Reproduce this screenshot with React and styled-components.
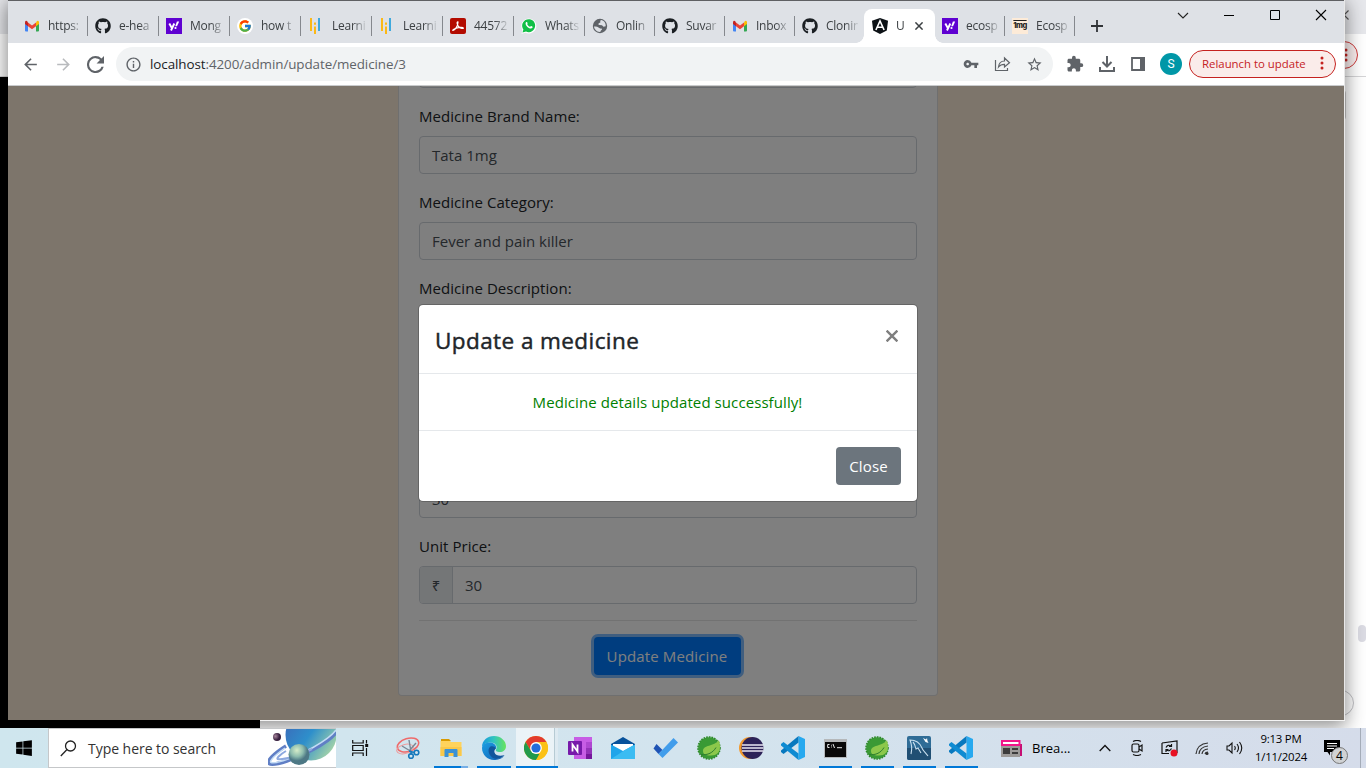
import React from "react";
import styled, { createGlobalStyle } from "styled-components";
import { FaGithub, FaWindows } from "react-icons/fa";
import { FcGoogle } from "react-icons/fc";
import { MdVpnKey, MdInfoOutline, MdStarBorder, MdExtension, MdArrowBack, MdArrowForward, MdRefresh } from "react-icons/md";

const Global = createGlobalStyle`
  * { box-sizing: border-box; }
  body { margin: 0; overflow: hidden; font-family: "Open Sans", "Noto Sans", sans-serif; }
  svg { display: block; flex: none; }
`;

/* ---------- desktop and windows ---------- */
const Desktop = styled.div`
  position: relative;
  display: flex;
  flex-direction: column;
  justify-content: flex-end;
  width: 1366px;
  height: 768px;
  overflow: hidden;
  background: #fff;
`;
const BackWindow = styled.div`
  position: absolute;
  inset: 0 0 40px 0;
  background: #fff;
`;
const BackStrip = styled.div`
  height: 34px;
  background: #e7e8ec;
  display: flex;
  justify-content: flex-end;
  align-items: center;
  padding: 0 17px 5px 0;
`;
const BackBar = styled.div`
  height: 43px;
  border-bottom: 1px solid #d5d5d7;
  display: flex;
  justify-content: flex-end;
  align-items: center;
  padding-right: 8px;
`;
const BackPill = styled.div`
  width: 60px;
  height: 28px;
  border: 1px solid #cf3a3a;
  border-radius: 14px;
  background: #fbeeee;
  display: flex;
  align-items: center;
  justify-content: flex-end;
  padding-right: 9px;
`;
const DarkWindow = styled.div`
  position: absolute;
  left: 0;
  top: 77px;
  width: 260px;
  height: 651px;
  background: #000;
`;
const ScrollThumb = styled.div`
  position: absolute;
  right: 0;
  top: 625px;
  width: 8px;
  height: 17px;
  border-radius: 4px;
  background: #dcdce4;
`;
const RoundButton = styled.div`
  position: absolute;
  right: 12px;
  top: 690px;
  width: 26px;
  height: 26px;
  border: 1px solid #c3c3c7;
  border-radius: 50%;
`;
const SideField = styled.div`
  position: absolute;
  right: 20px;
  top: 90px;
  width: 40px;
  height: 30px;
  border: 1px solid #ccc;
  border-radius: 3px;
`;
const Browser = styled.main`
  position: absolute;
  left: 8px;
  top: 0;
  width: 1336px;
  height: 720px;
  display: flex;
  flex-direction: column;
  border-top: 1px solid #5f6063;
  box-shadow: 1px 0 0 #e8e8e8, 0 4px 18px 2px rgba(0, 0, 0, 0.46);
  &::after {
    content: "";
    position: absolute;
    left: 252px;
    right: -1px;
    top: 100%;
    height: 1px;
    background: #f4f4f4;
  }
`;

/* ---------- tab strip ---------- */
const Strip = styled.div`
  display: flex;
  height: 42px;
  padding-left: 9px;
  background: #dee1e6;
`;
const TabBox = styled.div`
  position: relative;
  display: flex;
  align-items: center;
  gap: ${(p) => (p.$active ? 7 : 8)}px;
  width: ${(p) => p.$w}px;
  height: 34px;
  margin-top: 8px;
  padding: 0 ${(p) => (p.$active ? 12 : 6)}px 0 7px;
  background: ${(p) => (p.$active ? "#fff" : "transparent")};
  border-radius: 8px 8px 0 0;
  &::after {
    content: "";
    position: absolute;
    right: 0;
    top: 7px;
    width: 1px;
    height: 20px;
    background: ${(p) => (p.$line ? "#85888d" : "transparent")};
  }
`;
const Flare = styled.i`
  position: absolute;
  bottom: 0;
  ${(p) => (p.$right ? "left: 100%" : "right: 100%")};
  width: 8px;
  height: 8px;
  background: radial-gradient(circle at ${(p) => (p.$right ? "100%" : "0")} 0, transparent 7.5px, #fff 8px);
`;
const TabText = styled.span`
  flex: 1;
  min-width: 0;
  white-space: nowrap;
  font-size: 12px;
  line-height: 18px;
  letter-spacing: -0.25px;
  color: #3c4043;
  mask-image: linear-gradient(90deg, #000 60%, rgba(0, 0, 0, 0.1) 100%);
`;
const NewTab = styled.div`
  padding: 19px 0 0 16px;
`;
const Controls = styled.div`
  display: flex;
  align-items: flex-start;
  gap: 34px;
  margin-left: auto;
  padding: 8px 17px 0 0;
`;

/* ---------- toolbar ---------- */
const Toolbar = styled.div`
  display: flex;
  align-items: center;
  height: 43px;
  padding: 0 8px 0 13px;
  background: #fff;
  border-bottom: 1px solid #c9cbcd;
  color: #5f6368;
`;
const NavButtons = styled.div`
  display: flex;
  align-items: center;
  gap: 14px;
  margin-right: 12px;
`;
const Address = styled.div`
  display: flex;
  align-items: center;
  width: 937px;
  height: 34px;
  border-radius: 17px;
  background: #f1f3f4;
  padding: 0 10px 0 9px;
`;
const Url = styled.span`
  flex: 1;
  margin-left: 8px;
  font-size: 13.4px;
  line-height: 20px;
  letter-spacing: -0.07px;
  color: #5f6368;
  b { font-weight: 400; color: #202124; }
`;
const AddressIcons = styled.div`
  display: flex;
  align-items: center;
  gap: 15px;
`;
const Actions = styled.div`
  display: flex;
  align-items: center;
  gap: 14px;
  margin-left: 13px;
`;
const Avatar = styled.div`
  width: 22px;
  height: 22px;
  border-radius: 50%;
  background: #0097a7;
  color: #fff;
  font: 12px/22px Roboto, sans-serif;
  text-align: center;
`;
const Relaunch = styled.div`
  display: flex;
  align-items: center;
  justify-content: space-between;
  width: 147px;
  height: 28px;
  margin-left: auto;
  padding: 0 11px 2px 12px;
  border: 1px solid #c5221f;
  border-radius: 14px;
  background: #faecea;
  color: #c5221f;
  font-size: 11.4px;
  white-space: nowrap;
`;

/* ---------- page ---------- */
const Viewport = styled.section`
  position: relative;
  flex: 1;
  overflow: hidden;
  display: flex;
  justify-content: center;
  align-items: flex-end;
  padding: 0 16px 24px 0;
  background: antiquewhite;
`;
const Card = styled.div`
  width: 540px;
  flex: none;
  padding: 20px;
  background: #fff;
  border: 1px solid rgba(0, 0, 0, 0.125);
  border-radius: 4px;
`;
const Group = styled.div`
  margin-bottom: 16px;
`;
const Label = styled.label`
  display: block;
  height: 24px;
  margin-bottom: 8px;
  font-size: 15px;
  line-height: 25px;
  letter-spacing: 0.06px;
  color: #212529;
`;
const InputRow = styled.div`
  display: flex;
  height: 38px;
  border: 1px solid #ced4da;
  border-radius: 4px;
  overflow: hidden;
  font-size: 15px;
  line-height: 37px;
  color: #495057;
`;
const Addon = styled.span`
  width: 33px;
  text-align: center;
  background: #e9ecef;
  border-right: 1px solid #ced4da;
`;
const Value = styled.span`
  padding: 0 12px;
`;
const Actionbar = styled.div`
  display: flex;
  justify-content: center;
  padding: 16px 2px 0 0;
  border-top: 1px solid rgba(0, 0, 0, 0.1);
`;
const Button = styled.button`
  width: ${(p) => p.$w}px;
  height: 38px;
  padding: 0;
  border: 0;
  border-radius: 4px;
  background: ${(p) => (p.$primary ? "#007bff" : "#6c757d")};
  box-shadow: ${(p) => (p.$primary ? "0 0 0 3px #80bdff" : "none")};
  color: #fff;
  font: 15px/38px "Open Sans", sans-serif;
  letter-spacing: 0.14px;
`;
const Backdrop = styled.div`
  position: absolute;
  inset: 0;
  background: rgba(0, 0, 0, 0.5);
`;
const Modal = styled.div`
  position: absolute;
  left: 410px;
  top: 218px;
  width: 500px;
  border: 1px solid rgba(0, 0, 0, 0.2);
  border-radius: 5px;
  background: #fff;
  background-clip: padding-box;
`;
const ModalHeader = styled.header`
  display: flex;
  align-items: flex-start;
  justify-content: space-between;
  height: 69px;
  padding: 16px;
  border-bottom: 1px solid #e5e8eb;
  h4 {
    margin: 0;
    font-size: 22.5px;
    font-weight: 400;
    -webkit-text-stroke: 0.45px #212529;
    line-height: 39px;
    letter-spacing: 0.42px;
    color: #212529;
  }
  svg { margin: 9px 3px 0 0; }
`;
const ModalBody = styled.div`
  height: 56px;
  padding: 16px 17px 16px 16px;
  text-align: center;
  color: green;
  font-size: 15px;
  line-height: 25px;
  letter-spacing: 0.08px;
`;
const ModalFooter = styled.footer`
  display: flex;
  justify-content: flex-end;
  padding: 16px;
  border-top: 1px solid #e5e8eb;
`;

/* ---------- taskbar ---------- */
const Taskbar = styled.footer`
  position: relative;
  display: flex;
  height: 40px;
  background: linear-gradient(90deg, #cfe6ee, #d3e4ee 50%, #d5dcea);
  color: #000;
`;
const Start = styled.div`
  display: grid;
  place-items: center;
  width: 48px;
`;
const Search = styled.div`
  display: flex;
  align-items: center;
  width: 288px;
  padding-left: 11px;
  background: #fff;
  border: 1px solid #c5c7c9;
  border-right: 0;
  font-size: 14px;
  letter-spacing: -0.04px;
  color: #333;
  span { flex: 1; margin-left: 11px; white-space: nowrap; }
`;
const TaskView = styled.div`
  display: grid;
  place-items: center;
  width: 50px;
  padding-right: 2px;
`;
const Slot = styled.div`
  position: relative;
  display: grid;
  place-items: center;
  width: ${(p) => p.$w}px;
  padding-right: ${(p) => (p.$current ? 2 : 0)}px;
  background: ${(p) => (p.$current ? "linear-gradient(90deg, transparent 1px, #ebf3f7 1px 39px, #b7cbd4 39px 40px, #deeaf1 40px)" : "none")};
  &::after {
    content: "";
    position: absolute;
    bottom: 0;
    left: ${(p) => (p.$current ? 1 : 5)}px;
    right: ${(p) => (p.$current ? 0 : 4)}px;
    height: 2px;
    background: ${(p) => (p.$open ? (p.$stack ? "linear-gradient(90deg, #0078d7 78%, #76aee6 78%)" : "#0078d7") : "transparent")};
  }
`;
const News = styled.div`
  display: flex;
  align-items: center;
  gap: 9px;
  margin-left: 19px;
  width: 98px;
  font-size: 13px;
`;
const Tray = styled.div`
  display: flex;
  align-items: center;
  gap: 16px;
  svg:nth-child(2) { margin-left: 2px; }
`;
const Clock = styled.div`
  width: 66px;
  margin-left: 5px;
  padding-top: 2px;
  text-align: center;
  font-size: 11.4px;
  line-height: 18px;
  letter-spacing: -0.22px;
`;
const Notice = styled.div`
  position: relative;
  width: 37px;
  margin-left: 10px;
  padding-top: 12px;
  border-right: 1px solid #a4acb8;
`;
const Badge = styled.span`
  position: absolute;
  left: 7px;
  top: 19px;
  width: 17px;
  height: 17px;
  border: 1px solid #777;
  border-radius: 50%;
  background: #d0d2d4;
  font-size: 12px;
  line-height: 15px;
  text-align: center;
`;

/* ---------- drawings ---------- */
const Gmail = () => (
  <svg width="16" height="16" viewBox="0 0 16 16">
    <path d="M1 4v8.5q0 1 1 1h2V7z" fill="#4285f4" />
    <path d="M15 4v8.5q0 1-1 1h-2V7z" fill="#34a853" />
    <path d="M12 4.500 13 3q2-1 2 1.500V6l-3 2.300z" fill="#fbbc04" />
    <path d="M4 4.500 8 7.500l4-3v3.800L8 11.200 4 8.300z" fill="#ea4335" />
    <path d="M1 4.500Q1 2 3 3l1 1.500v3.800L1 6z" fill="#c5221f" />
  </svg>
);
const Yahoo = () => (
  <svg width="16" height="16" viewBox="0 0 16 16">
    <path fill="#5f01d1" d="M0 0h16v16H0z" />
    <path d="m3.300 5.500 2.400 4.300M8.300 5.500 5 12.500" stroke="#fff" strokeWidth="1.900" fill="none" />
    <path d="M10.900 3.500h2.300L11 8.300H9.200z" fill="#fff" />
    <circle cx="9.500" cy="10" r="1.100" fill="#fff" />
  </svg>
);
const Bars = () => (
  <svg width="16" height="16" viewBox="0 0 16 16">
    <path d="M3 0v13M7 8.500v7.500M7 4.500v2.200" stroke="#fbb917" strokeWidth="2" />
    <path d="M11 0v13" stroke="#3fa9dd" strokeWidth="2" />
  </svg>
);
const Pdf = () => (
  <svg width="16" height="16" viewBox="0 0 16 16">
    <rect width="16" height="16" rx="2" fill="#b30b00" />
    <path d="M3 12.500c2-.3 5-4.500 5-8.500-1.500-.7-1 3 .8 4.800 2 2 4.700 2 4.600 1.200-.2-1-6.400-1.200-9.900 1.500-.8.7-.9 1.100-.5 1z" fill="none" stroke="#fff" strokeWidth="1.200" />
  </svg>
);
const Github = () => <FaGithub size={16} color="#1b1f23" />;
const Globe = () => (
  <svg width="16" height="16" viewBox="0 0 16 16">
    <circle cx="8" cy="8" r="7.200" fill="#5f6368" />
    <path d="M2 8.500q3-.5 4.500 1T10 10.500c.5 1.500-1.500 1.500-1.500 3.300-3 .6-6-1.800-6.500-5.300zM9 2q-1.500 1-.5 2.200L6.500 5.500q-.5 1.500 1 1.500l2.500.3 1.500 1.500 2.200-.5C14 5 12 2.500 9 2z" fill="#dee1e6" />
  </svg>
);
const Disc = styled.span`
  display: grid;
  place-items: center;
  flex: none;
  width: 16px;
  height: 16px;
  border-radius: 50%;
  background: #fff;
`;
const Google = () => (
  <Disc><FcGoogle size={14} /></Disc>
);
const Whats = () => (
  <svg width="16" height="16" viewBox="0 0 16 16">
    <path d="M.5 15.700 1.500 12A7.500 7.500 0 1 1 4.500 14.700z" fill="#fff" />
    <path d="m1.500 14.500.9-3A6.500 6.500 0 1 1 5 13.600z" fill="#12bf47" />
    <path d="M5 4.300c.7-.6 1.200-.4 1.500.6.3.8-.6 1 0 1.800q.9 1.400 2.200 2c.8.3.9-1 1.600-.7 1.500.7 1.600.8 1.100 1.700-1 1.600-3.700.6-5.200-1C4.600 7.100 4.100 5.200 5 4.300z" fill="#fff" />
  </svg>
);
const Shield = () => (
  <svg width="18" height="16" viewBox="0 0 18 16">
    <path d="M9 0 17 2.700 15.800 12.500 9 16 2.200 12.500 1 2.700z" fill="#0c1116" />
    <path d="M4.900 12 9 2.900 13.100 12M6.300 9.300h5.400" stroke="#fff" strokeWidth="1.600" fill="none" />
  </svg>
);
const MgBox = styled.span`
  flex: none;
  width: 16px;
  height: 16px;
  background: #fdebd8;
  color: #222;
  font: 800 7.5px/16px Inter, sans-serif;
  letter-spacing: -0.6px;
  text-align: center;
  text-decoration: overline;
`;
const Dots = ({ color = "#c5221f" }) => (
  <svg width="4" height="14" viewBox="0 0 4 14" fill={color}>
    <circle cx="2" cy="2" r="1.500" /><circle cx="2" cy="7" r="1.500" /><circle cx="2" cy="12" r="1.500" />
  </svg>
);
const Cross = ({ s = 10, c = "#000", w = 1.1 }) => (
  <svg width={s} height={s} viewBox="0 0 10 10"><path d="m.5.5 9 9m0-9-9 9" stroke={c} strokeWidth={w} /></svg>
);
const Planet = () => (
  <svg width="68" height="38" viewBox="0 0 68 38">
    <defs>
      <linearGradient id="pl" x1="0" x2="1" y1="0" y2=".7"><stop stopColor="#3e62b5" /><stop offset=".55" stopColor="#2e8fcb" /><stop offset="1" stopColor="#a4d3a8" /></linearGradient>
      <radialGradient id="mn" cx=".4" cy=".3"><stop stopColor="#d6edc9" /><stop offset=".6" stopColor="#8dbcae" /><stop offset="1" stopColor="#4d7885" /></radialGradient>
      <radialGradient id="sm" cx=".3" cy=".4"><stop stopColor="#a8879d" /><stop offset="1" stopColor="#38203f" /></radialGradient>
    </defs>
    <circle cx="43" cy="6" r="25.500" fill="url(#pl)" />
    <path d="M18 17C5 25-2 33 1 34.500c5 3 28-5 44-14S67 5 68 3" fill="none" stroke="#607fc5" strokeWidth="3.500" />
    <path d="M17 19C7 26 1 32 3 33.500c5 2 26-6 42-15S66 4 68 1" fill="none" stroke="#c3dcf5" strokeWidth="1.500" />
    <path d="M18 22c-7 4-10 8-8 8 5 1 20-3 34-10" fill="none" stroke="#8da9df" strokeWidth="2" />
    <circle cx="31" cy="25.500" r="10.500" fill="url(#mn)" />
    <circle cx="9" cy="8" r="4" fill="url(#sm)" />
  </svg>
);
const Snip = () => (
  <svg width="24" height="24" viewBox="0 0 24 24" fill="none">
    <ellipse cx="12" cy="9" rx="11" ry="6.500" transform="rotate(-17 12 9)" stroke="#ef6a6a" strokeWidth="1.500" />
    <ellipse cx="9" cy="13" rx="8.500" ry="4.500" transform="rotate(-15 9 13)" stroke="#ef9a9a" />
    <path d="m13 4 2 12M20 7l-7 8M6 10l10 6" stroke="#7a8794" strokeWidth="1.400" />
    <circle cx="15" cy="20" r="2.300" stroke="#1678bb" strokeWidth="1.600" />
    <circle cx="20.500" cy="16.500" r="2.300" stroke="#1678bb" strokeWidth="1.600" />
    <path d="m13 15 5 1.500M15 16v3" stroke="#1678bb" strokeWidth="1.500" />
  </svg>
);
const Explorer = () => (
  <svg width="22" height="19" viewBox="0 0 22 19">
    <path d="M1 0h8l2 2H1z" fill="#d99a00" /><path d="M.5 2H10l1 1h10.500v14h-21z" fill="#ffd35c" /><path d="M.5 8h21v9h-21z" fill="#fac849" />
    <path d="M4.500 18v-7q0-1 1-1h11q1 0 1 1v7h-4v-4h-5v4z" fill="#3b92d6" />
  </svg>
);
const Edge = () => (
  <svg width="24" height="24" viewBox="0 0 24 24">
    <defs>
      <linearGradient id="eg" x1="0" x2="1"><stop stopColor="#1797df" /><stop offset=".5" stopColor="#32c5bd" /><stop offset="1" stopColor="#68e45c" /></linearGradient>
      <linearGradient id="eb" x1="0" x2="1" y1="0" y2="1"><stop stopColor="#1b9de2" /><stop offset="1" stopColor="#1261b5" /></linearGradient>
    </defs>
    <path d="M0 11C0 4.500 5.500 0 12 0c7 0 12 5 12 10 0 4-3 6-6 6-3.500 0-5-1.300-3.800-2.800C16 10 13 6.500 8.500 6.500 4 6.500 1 9 0 11z" fill="url(#eg)" />
    <path d="M0 12c0-3.500 4-6 8.500-5.500 4 .5 6.500 3.500 5.500 6-6-1-7 6-1 9 3 1.500 7 .5 9.500-2C20 23 15.500 24 12 24 5.500 24 0 18.500 0 12z" fill="url(#eb)" />
    <path d="M8.500 10.500C4.500 13 7 21 12.500 22.500c4 .8 8-1 10-3.500-4 1.500-9 .8-10-2.500-.6-2 .3-3 1.500-4-1.500-2-3.500-2.800-5.500-2z" fill="#11569d" />
  </svg>
);
const Chrome = () => (
  <svg width="24" height="24" viewBox="0 0 24 24">
    <circle cx="12" cy="12" r="12" fill="#fbc116" />
    <path d="M12 6.200h10.500A12 12 0 0 0 1.600 6L7 15z" fill="#e33b2e" />
    <path d="M1.600 6 7 15l5 2.900h5L12 24A12 12 0 0 1 1.600 6z" fill="#229a4b" />
    <path d="M17 15l-5 9A12 12 0 0 0 22.400 6H12z" fill="#fbc116" />
    <circle cx="12" cy="12" r="5.900" fill="#fff" /><circle cx="12" cy="12" r="4.600" fill="#246ddb" />
  </svg>
);
const OneNote = () => (
  <svg width="24" height="22" viewBox="0 0 24 22">
    <path fill="#c75de5" d="M6 0h18v22H6z" /><path fill="#ae47d1" d="M18 5h6v6h-6z" /><path fill="#9332b8" d="M18 11h6v6h-6z" /><path fill="#75179b" d="M18 17h6v5h-6z" />
    <rect y="4" width="14" height="14" rx="1" fill="#7719aa" /><path d="M4.500 14.500V7.500l5 7v-7" fill="none" stroke="#fff" strokeWidth="1.800" />
  </svg>
);
const Mail = () => (
  <svg width="24" height="22" viewBox="0 0 24 22">
    <path d="M0 7 12 0l12 7v4H0z" fill="#08529b" /><path d="M2 7h20v2.500L12 15 2 9.500z" fill="#fff" /><path d="M0 7.500 12 14 24 7.500V22H0z" fill="#20a5ea" /><path d="M0 22 14 13 24 7.500V22z" fill="#3bbcf2" />
  </svg>
);
const Todo = () => (
  <svg width="25" height="20" viewBox="0 0 25 20"><path d="m3.500 6 6 6-4 4-5-5.500z" fill="#1e53b4" /><path d="M20.500 0 25 4.500 9.500 20l-4-4z" fill="#419deb" /></svg>
);
const Spring = () => (
  <svg width="24" height="24" viewBox="0 0 24 24">
    <circle cx="12" cy="12" r="10.800" fill="#3a9a35" /><circle cx="12" cy="12" r="11" fill="none" stroke="#2f8a2b" strokeWidth="1.600" strokeDasharray="1.700 1" />
    <path d="M22 4c3 11-1 16-9 15.500-4-.2-7-1-7-4.500C6 8.500 17 11 22 4z" fill="#8cc84b" /><path d="M4 18.500c7 1 12-2 15-7" stroke="#2d7d2f" fill="none" />
  </svg>
);
const Eclipse = () => (
  <svg width="25" height="22" viewBox="0 0 25 22">
    <circle cx="11" cy="11" r="11" fill="#f39a2e" /><circle cx="13.500" cy="11" r="11" fill="#2d2358" /><path d="M3 8h21.500M3 11h21.500M3 14h21.500" stroke="#e9e7f2" strokeWidth="1.600" />
  </svg>
);
const Code = () => (
  <svg width="24" height="24" viewBox="0 0 24 24">
    <path d="M17.500 0 24 3v18l-6.500 3z" fill="#27a9ef" /><path d="M17.500 0v6.500L2.500 18 0 16v-1.500z" fill="#0878be" /><path d="M17.500 24v-6.500L2.500 6 0 8v1.500z" fill="#0f8bd2" />
  </svg>
);
const Cmd = () => (
  <svg width="23" height="19" viewBox="0 0 23 19">
    <path fill="#b5b8ba" d="M0 0h23v19H0z" /><path fill="#090909" d="M1 3h21v15H1z" /><path d="M5.500 5.500H3.700v3h1.800M7.500 5.800v.8m0 1v.8M9 5l1.500 4M13 8.700h5" fill="none" stroke="#e8e8e8" strokeWidth="1" />
  </svg>
);
const MySql = () => (
  <svg width="24" height="24" viewBox="0 0 24 24">
    <rect width="24" height="24" rx="2" fill="#2f6c96" /><path d="M0 12h24v10q0 2-2 2H2q-2 0-2-2z" fill="#204f73" />
    <path d="M4 18C5 14 5 9 3 4c6 0 10 3 12 8 1 3 3 4 6 8M6 6q2 2 3 7l2-1 3 5" fill="none" stroke="#c9dfee" strokeWidth="1.100" /><path d="m16 2 3 1.500 1-1.500.5 3 1 2-3-1z" fill="#fff" />
  </svg>
);

const tabs = [
  { icon: <Gmail />, text: "https:", w: 71 },
  { icon: <Github />, text: "e-hea", w: 71 },
  { icon: <Yahoo />, text: "Mong", w: 71 },
  { icon: <Google />, text: "how t", w: 71 },
  { icon: <Bars />, text: "Learni", w: 71 },
  { icon: <Bars />, text: "Learni", w: 71 },
  { icon: <Pdf />, text: "44572", w: 71 },
  { icon: <Whats />, text: "Whats", w: 71 },
  { icon: <Globe />, text: "Onlin", w: 70 },
  { icon: <Github />, text: "Suvar", w: 70 },
  { icon: <Gmail />, text: "Inbox", w: 70 },
  { icon: <Github />, text: "Clonin", w: 69 },
  { icon: <Shield />, text: "U", w: 71, active: true },
  { icon: <Yahoo />, text: "ecosp", w: 70 },
  { icon: <MgBox>1mg</MgBox>, text: "Ecosp", w: 70 },
];

const fields = [
  { label: "Medicine Brand Name:", value: "Tata 1mg" },
  { label: "Medicine Category:", value: "Fever and pain killer" },
  { label: "Medicine Description:", value: "" },
  { label: "", value: "" },
  { label: "", value: "30" },
  { label: "Unit Price:", value: "30", addon: "₹" },
];

const apps = [
  { icon: <Snip />, w: 43 },
  { icon: <Explorer />, w: 43, open: true, stack: true },
  { icon: <Edge />, w: 43, open: true },
  { icon: <Chrome />, w: 43, open: true, current: true },
  { icon: <OneNote />, w: 43 },
  { icon: <Mail />, w: 43 },
  { icon: <Todo />, w: 43 },
  { icon: <Spring />, w: 43 },
  { icon: <Eclipse />, w: 42 },
  { icon: <Code />, w: 42 },
  { icon: <Cmd />, w: 42, open: true },
  { icon: <Spring />, w: 42, open: true },
  { icon: <MySql />, w: 42, open: true },
  { icon: <Code />, w: 42, open: true },
];

export default function App() {
  return (
    <Desktop>
      <Global />
      <BackWindow>
        <BackStrip><Cross c="#555" /></BackStrip>
        <BackBar><BackPill><Dots /></BackPill></BackBar>
        <SideField />
      </BackWindow>
      <DarkWindow />
      <ScrollThumb />
      <RoundButton />
      <Browser>
        <Strip>
          {tabs.map((t, i) => (
            <TabBox key={i} $w={t.w} $active={t.active} $line={!t.active && i !== 11 && i !== 13 ? true : i === 13}>
              {t.icon}
              <TabText>{t.text}</TabText>
              {t.active && <Cross s={8} c="#3c4043" w={1.9} />}
              {t.active && <Flare />}
              {t.active && <Flare $right />}
            </TabBox>
          ))}
          <NewTab>
            <svg width="12" height="12" viewBox="0 0 12 12"><path d="M6 0v12M0 6h12" stroke="#303337" strokeWidth="1.800" /></svg>
          </NewTab>
          <Controls>
            <svg width="12" height="12" viewBox="0 0 12 12"><path d="m1 4 5 5 5-5" fill="none" stroke="#222" strokeWidth="1.100" /></svg>
            <svg width="12" height="12" viewBox="0 0 12 12"><path d="M1 6.500h10" stroke="#000" /></svg>
            <svg width="12" height="12" viewBox="0 0 12 12"><path d="M1.500 1.500h9v9h-9z" fill="none" stroke="#000" /></svg>
            <svg width="12" height="12" viewBox="0 0 12 12"><path d="m1 1 10 10m0-10L1 11" stroke="#000" strokeWidth="1.100" /></svg>
          </Controls>
        </Strip>
        <Toolbar>
          <NavButtons>
            <MdArrowBack size={19} />
            <MdArrowForward size={19} color="#b9bbbe" />
            <svg width="17" height="17" viewBox="4 4 16 16" fill="#5f6368"><path d="M17.650 6.350A7.950 7.950 0 0 0 12 4a8 8 0 1 0 7.730 10h-2.080A6 6 0 1 1 12 6c1.660 0 3.140.69 4.220 1.780L13 11h7V4z" /></svg>
          </NavButtons>
          <Address>
            <MdInfoOutline size={17} />
            <Url><b>localhost</b>:4200/admin/update/medicine/3</Url>
            <AddressIcons>
              <MdVpnKey size={16} />
              <svg width="17" height="16" viewBox="0 0 17 16" fill="none" stroke="#5f6368" strokeWidth="1.200"><path d="M1.500 4v10.500h12V12" /><path d="M4.500 11c.5-4.500 3-6 6-6V2l5 4.700-5 4.300V8.300c-3 0-4.500.7-6 2.700z" /></svg>
              <MdStarBorder size={17} />
            </AddressIcons>
          </Address>
          <Actions>
            <MdExtension size={18} />
            <svg width="18" height="16" viewBox="0 0 18 16" fill="none" stroke="#5f6368" strokeWidth="2"><path d="M9 0v10M4.500 6 9 10.500 13.500 6M2 11v4h14v-4" /></svg>
            <svg width="16" height="14" viewBox="-1 0 16 14"><path d="M1 1h12v12H1z" fill="none" stroke="#5f6368" strokeWidth="1.800" /><path d="M9 0h5v14H9z" fill="#5f6368" /></svg>
            <Avatar>S</Avatar>
          </Actions>
          <Relaunch>Relaunch to update <Dots /></Relaunch>
        </Toolbar>
        <Viewport>
          <Card>
            <Group><InputRow /></Group>
            {fields.map((f, i) => (
              <Group key={i}>
                <Label>{f.label}</Label>
                <InputRow>
                  {f.addon && <Addon>{f.addon}</Addon>}
                  <Value>{f.value}</Value>
                </InputRow>
              </Group>
            ))}
            <Actionbar><Button $primary $w={147}>Update Medicine</Button></Actionbar>
          </Card>
          <Backdrop />
          <Modal role="dialog">
            <ModalHeader>
              <h4>Update a medicine</h4>
              <Cross s={12} c="#7f7f7f" w={2} />
            </ModalHeader>
            <ModalBody>Medicine details updated successfully!</ModalBody>
            <ModalFooter><Button $w={65}>Close</Button></ModalFooter>
          </Modal>
        </Viewport>
      </Browser>
      <Taskbar>
        <Start><FaWindows size={18} /></Start>
        <Search>
          <svg width="17" height="17" viewBox="0 0 17 17"><circle cx="10.500" cy="6" r="5" fill="none" stroke="#222" strokeWidth="1.300" /><path d="M7 9.500.8 16" stroke="#222" strokeWidth="1.300" /></svg>
          <span>Type here to search</span>
          <Planet />
        </Search>
        <TaskView>
          <svg width="17" height="16" viewBox="0 0 17 16" fill="none" stroke="#111" strokeWidth="1.200"><path d="M.7 0v3h10.500V0M.7 5.500h10.500v5H.7zM.7 16v-3h10.500v3M14.500 0v3.500M14.500 8v8" /><path d="M13.200 4h3v3h-3z" fill="#111" stroke="none" /></svg>
        </TaskView>
        {apps.map((a, i) => (
          <Slot key={i} $w={a.w} $open={a.open} $current={a.current} $stack={a.stack}>{a.icon}</Slot>
        ))}
        <News>
          <svg width="22" height="17" viewBox="0 0 22 17"><path d="M18 4h3v12h-3z" fill="#c50f73" /><path d="M0 5h19v12H0z" fill="#9d9b99" /><path d="M1 1h17.500v4H1z" fill="#fff" stroke="#f01588" strokeWidth="2" /><path d="M2 8h7v6H2zM11 8h6v2h-6zM11 12h6v2h-6z" fill="#3c3c3c" /></svg>
          Brea...
        </News>
        <Tray>
          <svg width="12" height="8" viewBox="0 0 12 8"><path d="m.7 7 5.300-5.500L11.300 7" fill="none" stroke="#111" strokeWidth="1.300" /></svg>
          <svg width="16" height="16" viewBox="0 0 16 16" fill="none" stroke="#111" strokeWidth="1.200"><rect x="3" y="4" width="7" height="8" rx="1.500" /><path d="m10 7 3-2v6l-3-2M4 1.500Q8-.5 12 1.500M4 14.500q4 2 8 0" /></svg>
          <svg width="17" height="17" viewBox="0 0 17 17" fill="none" stroke="#111" strokeWidth="1.200"><path d="M1 3 16 1v12M1 3v10.500h7" /><path d="M5 7.500Q7 4 10 6M10.500 4v2.500H8M10.500 8.500Q8.500 12 5.500 10M5 12V9.500h2.500" /><circle cx="13" cy="13" r="3.500" fill="#e81123" stroke="none" /></svg>
          <svg width="16" height="16" viewBox="0 0 16 16" fill="none" stroke="#333" strokeWidth="1.200"><path d="M2 14Q3 4 14 3M5 14q.5-7 9-8M8 14q.5-4.500 6-5M11 14q.5-2 3-2" /><circle cx="13" cy="13.500" r="1" fill="#111" /></svg>
          <svg width="17" height="14" viewBox="0 0 17 14" fill="none" stroke="#111" strokeWidth="1.100"><path d="M1 5h2l3-3v10L3 9H1zM8.500 5q1.500 2 0 4M11 3q3 4 0 8M13.500 1q4.500 6 0 12" /></svg>
        </Tray>
        <Clock>9:13 PM<br />1/11/2024</Clock>
        <Notice>
          <svg width="16" height="16" viewBox="0 0 16 16"><path d="M0 0h16v12H6v3.500L3.500 12H0z" fill="#000" /><path d="M3 3.500h10M3 6h10M3 8.500h7" stroke="#fff" strokeWidth="1.100" /></svg>
          <Badge>4</Badge>
        </Notice>
      </Taskbar>
    </Desktop>
  );
}
